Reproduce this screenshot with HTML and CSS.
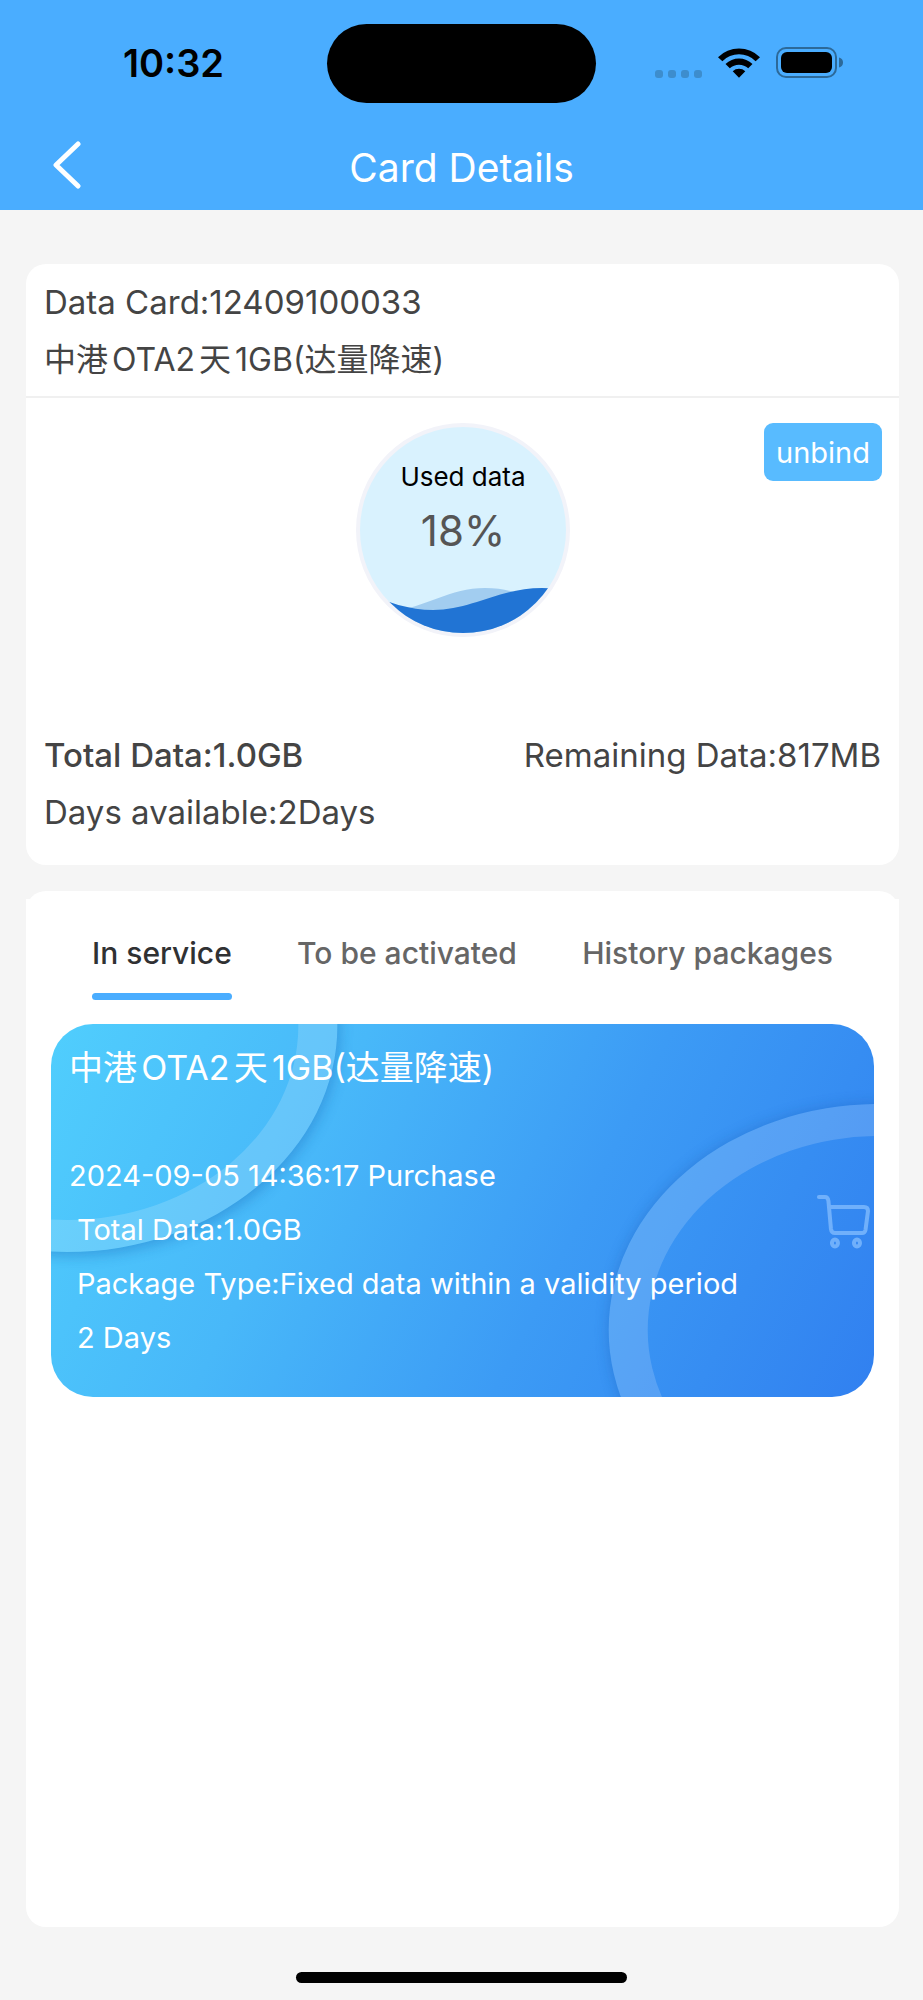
FILE: index.html
```html
<!DOCTYPE html>
<html lang="en">
<head>
<meta charset="utf-8">
<meta name="viewport" content="width=device-width, initial-scale=1">
<title>Card Details</title>
<link rel="stylesheet" href="styles.css">
</head>
<body>
<div class="screen">
  <header class="header">
    <div class="status">
      <time class="status-time">10:32</time>
      <div class="island"></div>
      <div class="status-icons">
        <svg class="icon-signal" viewBox="0 0 48 8" aria-hidden="true"><g fill="#3d8dcd"><rect width="8" height="8" rx="3"/><rect x="13" width="8" height="8" rx="3"/><rect x="26" width="8" height="8" rx="3"/><rect x="39" width="8" height="8" rx="3"/></g></svg>
        <svg class="icon-wifi" viewBox="0 0 42 31" aria-hidden="true"><path d="M0 10.200A30 30 0 0 1 42 10.200L37.600 14.200A23.500 23.500 0 0 0 4.400 14.200Z M7.500 17A19.500 19.500 0 0 1 34.500 17L30.200 21.300A13.400 13.400 0 0 0 11.800 21.300Z M14.700 24.200A9.500 9.500 0 0 1 27.300 24.200L21 30.800Z"/></svg>
        <svg class="icon-battery" viewBox="0 0 68 31" aria-hidden="true"><rect x="1" y="1" width="59" height="29" rx="9" fill="none" stroke="#2c6999" stroke-width="2"/><rect x="5" y="5" width="51" height="21" rx="6"/><path d="M63 10.500q4 1 4 5t-4 5z" fill="#2c6999"/></svg>
      </div>
    </div>
    <nav class="navbar">
      <button class="back" type="button" aria-label="Back"><svg viewBox="0 0 28 48" aria-hidden="true"><path d="M25 3 3 24 25 45" fill="none" stroke="#fff" stroke-width="5" stroke-linecap="round" stroke-linejoin="round"/></svg></button>
      <h1 class="title">Card Details</h1>
    </nav>
  </header>

  <main class="content">
    <section class="card">
      <div class="card-head">
        <p class="line">Data Card:12409100033</p>
        <p class="line plan" lang="zh-CN">中港OTA2天1GB(达量降速)</p>
      </div>
      <div class="usage">
        <div class="gauge">
          <svg class="gauge-art" viewBox="0 0 206 206" aria-hidden="true">
            <path fill="#a2cdf0" d="M30 185C66 180 90 161 125 161S170 175 206 180V206H30Z"/>
            <path fill="#2174d4" d="M0 163C28 176 50 183 73 183C112 183 140 161 182 161C192 161 200 162 206 164V206H0Z"/>
          </svg>
          <span class="gauge-label">Used data</span>
          <span class="gauge-value">18%</span>
        </div>
        <button class="unbind" type="button">unbind</button>
      </div>
      <div class="totals">
        <p class="line strong">Total Data:1.0GB</p>
        <p class="line">Remaining Data:817MB</p>
      </div>
      <p class="line days">Days available:2Days</p>
    </section>

    <section class="card packages">
      <div class="tabs" role="tablist">
        <button class="tab active" type="button" role="tab" aria-selected="true">In service</button>
        <button class="tab" type="button" role="tab" aria-selected="false">To be activated</button>
        <button class="tab" type="button" role="tab" aria-selected="false">History packages</button>
      </div>
      <article class="package">
        <svg class="package-art" viewBox="0 0 822 373" preserveAspectRatio="none" aria-hidden="true">
          <defs>
            <filter id="shade" x="-20%" y="-20%" width="140%" height="140%"><feGaussianBlur stdDeviation="7"/></filter>
            <clipPath id="outside-left"><path clip-rule="evenodd" d="M0 0H822V373H0ZM-254 2a270 226 0 1 0 540 0a270 226 0 1 0-540 0Z"/></clipPath>
            <clipPath id="outside-right"><path clip-rule="evenodd" d="M0 0H822V373H0ZM557 306a270 226 0 1 0 540 0a270 226 0 1 0-540 0Z"/></clipPath>
          </defs>
          <g clip-path="url(#outside-left)"><ellipse cx="18" cy="6" rx="270" ry="226" fill="#1c6fc0" opacity=".45" filter="url(#shade)"/></g>
          <g clip-path="url(#outside-right)"><ellipse cx="827" cy="306" rx="270" ry="226" fill="#1c5fb8" opacity=".4" filter="url(#shade)"/></g>
          <g fill="#fff" fill-opacity=".16" fill-rule="evenodd">
            <path d="M-254 2a270 226 0 1 0 540 0a270 226 0 1 0-540 0ZM-215 2a231 194 0 1 0 462 0a231 194 0 1 0-462 0Z"/>
            <path d="M557 306a270 226 0 1 0 540 0a270 226 0 1 0-540 0ZM596 306a231 194 0 1 0 462 0a231 194 0 1 0-462 0Z"/>
          </g>
          <g fill="none" stroke="#70b0fb" stroke-width="4" stroke-linecap="round" stroke-linejoin="round">
            <path d="M767 173H773Q776 173 776.500 177L779 205Q779.500 209 783 209H810Q813 209 813.500 206L816 187Q816 183 812 183H777"/>
            <ellipse cx="783" cy="219" rx="3" ry="3.500"/><ellipse cx="805" cy="219" rx="3" ry="3.500"/>
          </g>
        </svg>
        <h2 class="package-title plan" lang="zh-CN">中港OTA2天1GB(达量降速)</h2>
        <p class="package-line">2024-09-05 14:36:17 Purchase</p>
        <p class="package-line inset">Total Data:1.0GB</p>
        <p class="package-line inset">Package Type:Fixed data within a validity period</p>
        <p class="package-line inset">2 Days</p>
      </article>
    </section>
  </main>
  <div class="home-bar"></div>
</div>
</body>
</html>
```
FILE: styles.css
```css
* { box-sizing: border-box; }
body, h1, h2, p { margin: 0; font-weight: 400; }
body {
  background: #f5f5f5;
  color: #444;
  font-family: Inter, "Noto Sans CJK SC", sans-serif;
}
button { border: 0; padding: 0; background: none; font: inherit; color: inherit; }
svg { display: block; }

.screen { display: flex; flex-direction: column; min-height: 100vh; }

.header { background: #4aadff; color: #fff; height: 210px; }
.status {
  display: grid;
  grid-template-columns: 1fr 269px 1fr;
  align-items: center;
  padding-top: 24px;
}
.status-time { color: #000; font-size: 38px; font-weight: 600; text-align: center; padding: 0 0 2px 20px; }
.island { height: 79px; border-radius: 40px; background: #000; }
.status-icons { display: flex; align-items: flex-end; padding: 0 0 3px 59px; }
.icon-signal { width: 48px; height: 8px; }
.icon-wifi { width: 42px; height: 31px; margin-left: 15px; }
.icon-battery { width: 68px; height: 31px; margin-left: 16px; }

.navbar { display: grid; grid-template-columns: 120px 1fr 120px; align-items: center; height: 107px; }
.navbar .title { padding-top: 22px; }
.back { padding: 17px 0 0 53px; justify-self: start; }
.back svg { width: 28px; height: 48px; }
.title { font-size: 39px; line-height: 48px; text-align: center; }

.content { flex: 1; display: flex; flex-direction: column; gap: 26px; padding: 54px 24px 73px 26px; }
.card { background: #fff; border-radius: 20px; }
.card-head { padding: 10px 18px 8px; border-bottom: 2px solid #f0f0f0; }
.line { font-size: 33px; line-height: 57px; }
.plan { text-autospace: normal; }
.line.plan { font-size: 32px; }
.strong { font-weight: 500; }

.usage { display: grid; grid-template-columns: 1fr auto 1fr; align-items: start; padding: 25px 17px 0 18px; }
.gauge {
  grid-column: 2;
  position: relative;
  display: flex;
  flex-direction: column;
  align-items: center;
  width: 214px;
  height: 214px;
  padding-top: 32px;
  border: 4px solid #f2f3f9;
  border-radius: 50%;
  background: #d9f2fe;
  overflow: hidden;
}
.gauge-art { position: absolute; inset: 0; }
.gauge-label { color: #000; font-size: 26px; line-height: 36px; }
.gauge-value { color: #555; font-size: 42px; line-height: 52px; margin-top: 10px; }
.unbind { justify-self: end; height: 58px; padding: 0 12px; border-radius: 9px; background: #58bbff; color: #fff; font-size: 29px; }

.totals { display: flex; justify-content: space-between; padding: 90px 18px 0; }
.days { padding: 0 18px 24px; }

.packages { flex: 1; padding: 8px 0 30px; }
.tabs { display: flex; justify-content: space-between; padding: 22px 66px 0; background: #fff; }
.tab { display: flex; flex-direction: column; gap: 22px; padding-top: 14px; color: #666; font-size: 30px; font-weight: 500; line-height: 36px; }
.tab::after { content: ""; width: 100%; height: 7px; border-radius: 4px; }
.tab.active { color: #303133; }
.tab.active::after { background: #4aadff; }

.package {
  position: relative;
  margin: 24px 25px 0;
  padding: 17px 18px 32px;
  border-radius: 42px;
  background: linear-gradient(116deg, #50cefd 0%, #48b8f9 32%, #3c9bf5 62%, #368df2 82%, #3180f0 100%);
  color: #fff;
  overflow: hidden;
}
.package-art { position: absolute; inset: 0; width: 100%; height: 100%; }
.package-title, .package-line { position: relative; }
.package-title { font-size: 34px; line-height: 54px; margin-bottom: 54px; }
.package-line { font-size: 29px; line-height: 54px; }
.inset { padding-left: 8px; }

.home-bar { align-self: center; width: 331px; height: 11px; margin: -28px 0 17px; border-radius: 6px; background: #000; }
```
